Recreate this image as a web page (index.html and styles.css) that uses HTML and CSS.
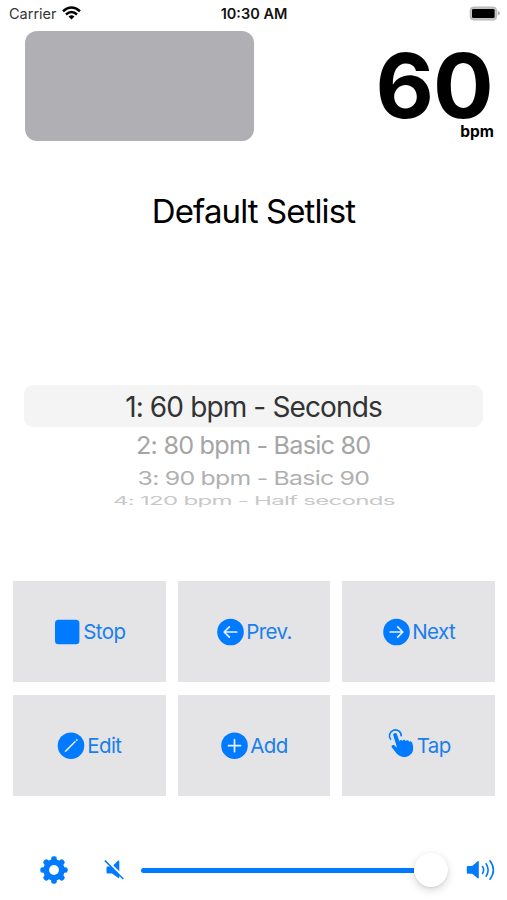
FILE: index.html
```html
<!DOCTYPE html>
<html lang="en">
<head>
<meta charset="utf-8">
<title>Metronome</title>
<link rel="stylesheet" href="styles.css">
</head>
<body>
<main class="app">
  <header class="status">
    <div class="carrier"><span>Carrier</span>
      <svg class="wifi" width="19" height="14" viewBox="0 0 19 14"><g fill="none" stroke="#000" stroke-width="2.5"><path d="M1 5.2Q9.500-2.300 18 5.200"/><path d="M4 8.500Q9.500 3.500 15 8.500"/></g><path d="M9.500 13.500L6.500 10.500Q9.500 8 12.500 10.500Z"/></svg>
    </div>
    <time class="clock">10:30 AM</time>
    <svg class="battery" width="31" height="15" viewBox="0 0 31 15"><rect x="1.200" y="1" width="26.400" height="13" rx="3.500" fill="#c4c4c4" stroke="#b5b5b5" stroke-width="1"/><rect x="3" y="3" width="22.600" height="9" rx="1.200"/><path d="M28.800 5Q30.800 6 30.800 7.300T28.800 9.600Z" fill="#aaa"/></svg>
  </header>
  <section class="top">
    <div class="beat"></div>
    <div class="tempo"><div class="value">60</div><div class="unit">bpm</div></div>
  </section>
  <h1 class="title">Default Setlist</h1>
  <section class="picker">
    <div class="row selected"><span>1: 60 bpm - Seconds</span></div>
    <div class="row second"><span>2: 80 bpm - Basic 80</span></div>
    <div class="row third"><span>3: 90 bpm - Basic 90</span></div>
    <div class="row fourth"><span>4: 120 bpm - Half seconds</span></div>
  </section>
  <section class="grid">
    <button class="tile"><svg width="28" height="28" viewBox="0 0 28 28"><rect x="2" y="1.800" width="24.400" height="24.400" rx="3.500"/></svg><span>Stop</span></button>
    <button class="tile"><svg width="28" height="28" viewBox="0 0 28 28"><circle cx="14.500" cy="14" r="13.300"/><path class="mark" d="M20.800 14H8.300M13.300 8.900L8.200 14L13.300 19.100"/></svg><span>Prev.</span></button>
    <button class="tile"><svg width="28" height="28" viewBox="0 0 28 28"><circle cx="14.500" cy="14" r="13.300"/><path class="mark" d="M8.200 14H20.700M15.700 8.900L20.800 14L15.700 19.100"/></svg><span>Next</span></button>
    <button class="tile"><svg width="28" height="28" viewBox="0 0 28 28"><circle cx="14" cy="13.700" r="13.300"/><path class="pencil" d="M7.500 20.300L8.400 18.300L18 8.700L19 9.700L9.400 19.400ZM18.700 8L19.400 7.300Q20 6.900 20.500 7.400T20.500 8.500L19.700 9.200Z"/></svg><span>Edit</span></button>
    <button class="tile"><svg width="28" height="28" viewBox="0 0 28 28"><circle cx="14.500" cy="13.700" r="13.300"/><path class="mark" d="M8.500 13.700H20.500M14.500 7.700V19.700"/></svg><span>Add</span></button>
    <button class="tile"><svg width="28" height="35" viewBox="0 0 28 35"><path d="M3.900 11.700A5.900 5.900 0 1 1 14.200 8.400" fill="none" stroke="#007aff" stroke-width="1.600"/><path d="M6.300 7.600C5.500 4.900 9.100 3.900 10 6.500L12.500 13.500C12.600 11.900 14.600 11.300 15.500 13.100C15.900 11.400 18 11.400 18.800 13.200C19.600 11.700 21.600 11.900 22.300 13.800C23.600 12.500 25 13.500 25.400 15.600C26.800 20.300 26.700 25 22.300 27.500C17.500 30.400 12.800 28.900 9.800 25.800L4.900 19.600C3.900 18 5.600 16.200 7.300 17.300L10.100 19.700Z"/></svg><span>Tap</span></button>
  </section>
  <footer class="controls">
    <svg class="gear" width="28" height="28" viewBox="0 0 28 28"><g><rect id="tooth" x="11.200" y=".3" width="5.600" height="27.400" rx="2.300"/><use href="#tooth" transform="rotate(45 14 14)"/><use href="#tooth" transform="rotate(90 14 14)"/><use href="#tooth" transform="rotate(135 14 14)"/><circle cx="14" cy="14" r="10.700"/></g><circle cx="14" cy="14" r="4.900" fill="#fff"/></svg>
    <svg class="mute" width="21" height="20" viewBox="0 0 21 20"><path d="M3.500 6.500H8L14 .8Q15.300-.2 15.300 1.200V17.500Q15.300 18.800 14 17.800L8 13.500H3.500Q2.500 13.500 2.500 12.500V7.500Q2.500 6.500 3.500 6.500Z"/><path d="M1.800-.3L20.700 18.600" stroke="#fff" stroke-width="2.600"/><path d="M.8.500L19.300 19" stroke="#007aff" stroke-width="1.600"/></svg>
    <div class="slider"><div class="track"></div><div class="thumb"></div></div>
    <svg class="volume" width="29" height="22" viewBox="0 0 29 22"><path d="M2 7H6.200L11.600 2.300Q12.800 1.500 12.800 3V18.600Q12.800 20 11.600 19.200L6.200 14.800H2Q.8 14.800.8 13.600V8.200Q.8 7 2 7Z"/><path d="M16.300 7Q18.900 11 16.300 15M19.800 4.200Q24.500 11 19.800 17.800M23.600 1.300Q31.200 11 23.600 20.700" fill="none" stroke="#007aff" stroke-width="1.600"/></svg>
  </footer>
</main>
</body>
</html>
```
FILE: styles.css
```css
* { box-sizing: border-box; }
body { margin: 0; background: #fff; font-family: Inter, "Liberation Sans", sans-serif; }
.app { width: 507px; height: 900px; display: flex; flex-direction: column; overflow: hidden; }
svg { display: block; flex: none; }
.status { height: 28px; padding: 0 7px 0 9px; display: grid; grid-template-columns: 1fr auto 1fr; align-items: center; font-size: 14.5px; line-height: 28px; color: #111; }
.carrier { display: flex; align-items: center; gap: 5px; color: #333; }
.wifi { margin-bottom: 2px; }
.clock { font-weight: 600; margin-right: 1px; }
.battery { justify-self: end; margin-bottom: 1px; }
.top { height: 114px; padding: 3.4px 13px 0 25.400px; display: flex; justify-content: space-between; }
.beat { width: 229px; height: 110px; border-radius: 12px; background: #b0afb4; }
.tempo { text-align: right; font-weight: 700; }
.value { margin-top: 19px; padding-right: 1px; font-size: 90px; line-height: 72px; height: 72px; font-weight: 700; letter-spacing: -.8px; }
.unit { font-size: 15.5px; line-height: 20px; }
.title { margin: 47px 0 0; height: 44px; line-height: 44px; text-align: center; font-size: 33px; font-weight: 400; letter-spacing: -.9px; }
.picker { margin: 152px 24px 0; text-align: center; font-size: 28px; letter-spacing: -.87px; white-space: nowrap; }
.row { display: flex; align-items: center; justify-content: center; }
.selected { height: 42px; padding-top: 2px; border-radius: 9px; background: #f4f4f4; color: #333; }
.second { height: 36px; color: #a5a5a5; }
.third { height: 30px; color: #b0b0b0; }
.fourth { height: 16px; color: #c8c8c8; }
.second span { transform: scale(.9, .86); }
.third span { transform: scale(.888, .68); }
.fourth span { transform: scale(.86, .42); }
.grid { margin: 72px 12px 0 13px; display: grid; grid-template-columns: repeat(3, 1fr); grid-auto-rows: 101px; gap: 13px 12px; }
.tile { display: flex; align-items: center; justify-content: center; gap: 2px; padding: 0; border: 0; background: #e4e4e6; color: #187fec; font: 20.5px Inter, sans-serif; letter-spacing: -.6px; }
.tile svg, .gear, .mute, .volume { fill: #007aff; }
.tile .mark { fill: none; stroke: #e8f1ff; stroke-width: 1.700; stroke-linecap: round; stroke-linejoin: round; }
.tile .pencil { fill: #e8f1ff; }
.controls { margin: 44px 12px 0 39.5px; height: 60px; display: flex; align-items: center; }
.mute { margin-left: 36px; }
.slider { flex: 1; height: 34px; margin: 0 18.5px 0 16.5px; display: flex; align-items: center; }
.track { flex: 1; height: 5px; border-radius: 3px 0 0 3px; background: #007aff; }
.thumb { width: 34px; height: 34px; border-radius: 50%; background: #fff; box-shadow: 0 3px 9px rgba(0,0,0,.16), 0 1px 2px rgba(0,0,0,.08); }
```
